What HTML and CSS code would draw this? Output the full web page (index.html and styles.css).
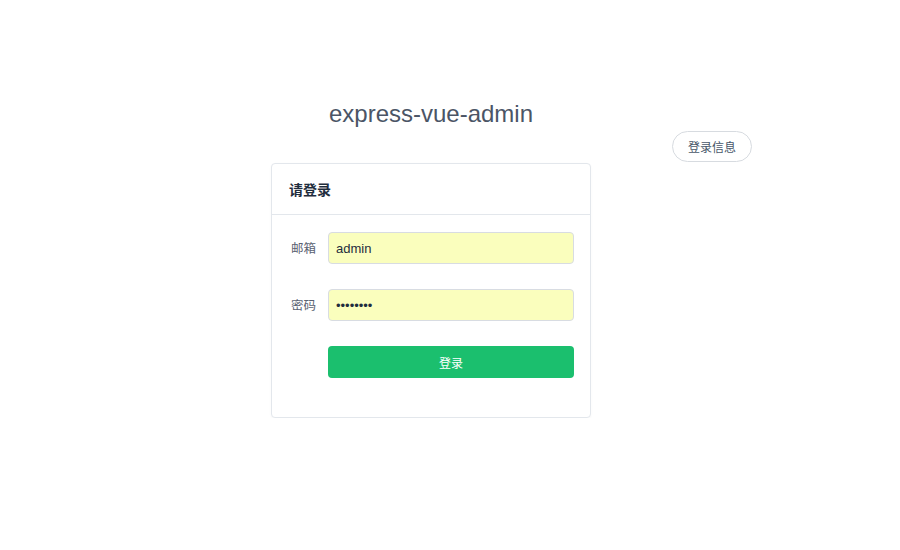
FILE: index.html
```html
<!DOCTYPE html>
<html lang="zh">
<head>
<meta charset="utf-8">
<title>express-vue-admin</title>
<link rel="stylesheet" href="styles.css">
</head>
<body>
<div class="page">
  <div class="main-col">
    <h1 class="title">express-vue-admin</h1>
    <div class="card">
      <div class="card-header">请登录</div>
      <form class="card-body">
        <div class="form-item">
          <label class="form-label">邮箱</label>
          <input class="form-input" type="text" value="admin">
        </div>
        <div class="form-item">
          <label class="form-label">密码</label>
          <input class="form-input" type="password" value="12345678">
        </div>
        <div class="form-item">
          <span class="form-label"></span>
          <button class="btn-primary" type="button">登录</button>
        </div>
      </form>
    </div>
  </div>
  <button class="btn-round" type="button">登录信息</button>
</div>
</body>
</html>
```

FILE: styles.css
```css
html, body {
  margin: 0;
  padding: 0;
  background: #ffffff;
}
body {
  font-family: "Liberation Sans", "Noto Sans CJK SC", sans-serif;
  color: #48576a;
}
.page {
  display: flex;
  align-items: flex-start;
  padding-top: 100px;
  padding-left: 271px;
}
.main-col {
  width: 320px;
  display: flex;
  flex-direction: column;
}
.title {
  margin: 0 0 35px 0;
  font-size: 24px;
  line-height: 28px;
  font-weight: normal;
  text-align: center;
  color: #4b5566;
}
.card {
  border: 1px solid #e3e7ec;
  border-radius: 4px;
  background: #fff;
  box-shadow: 0 1px 3px rgba(0, 0, 0, 0.03);
}
.card-header {
  padding: 18px 20px 18px 17px;
  line-height: 14px;
  font-size: 14px;
  font-weight: bold;
  color: #1f2d3d;
  border-bottom: 1px solid #e3e7ec;
  font-family: "Noto Sans CJK SC", sans-serif;
}
.card-body {
  display: flex;
  flex-direction: column;
  gap: 25px;
  padding: 17px 15px 39px 19px;
  margin: 0;
}
.form-item {
  display: flex;
  align-items: center;
}
.form-label {
  box-sizing: border-box;
  width: 37px;
  padding-right: 12px;
  text-align: right;
  white-space: nowrap;
  font-size: 12.5px;
  line-height: 16px;
  color: #5a6272;
  font-family: "Noto Sans CJK SC", sans-serif;
  flex-shrink: 0;
}
.form-input {
  width: 246px;
  height: 32px;
  box-sizing: border-box;
  border: 1px solid #d8dce2;
  border-radius: 4px;
  background: #fafebd;
  padding: 0 7px;
  font-family: "Liberation Sans", sans-serif;
  font-size: 13px;
  color: #1f2d3d;
  outline: none;
  margin: 0;
}
.btn-primary {
  width: 246px;
  height: 32px;
  border: none;
  border-radius: 4px;
  background: #1bbf6e;
  color: #ffffff;
  font-size: 12px;
  font-family: "Noto Sans CJK SC", sans-serif;
  padding: 0;
  margin: 0;
}
.btn-round {
  margin-left: 81px;
  margin-top: 31px;
  width: 80px;
  height: 31px;
  border: 1px solid #d7dbe0;
  border-radius: 16px;
  background: #fff;
  color: #48576a;
  font-size: 12px;
  font-family: "Noto Sans CJK SC", sans-serif;
  padding: 0;
}
```
